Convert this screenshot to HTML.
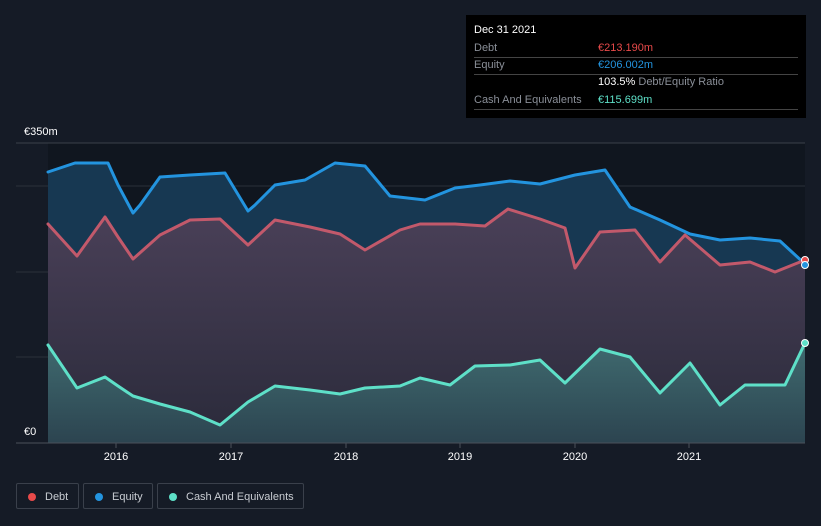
<!DOCTYPE html>
<html><head><meta charset="utf-8"><style>
body{margin:0;width:821px;height:526px;background:#151b26;font-family:"Liberation Sans",sans-serif;overflow:hidden;position:relative}
.tt{position:absolute;left:466px;top:15px;width:340px;height:103px;background:#000;color:#fff;font-size:11px}
.tt .r{position:absolute;left:8px;right:8px;border-bottom:1px solid #444;height:17px;line-height:17px}
.g{color:#8a8f98}
.leg{position:absolute;top:483px;height:26px;border:1px solid #3a404b;border-radius:2px;color:#c8ccd2;font-size:11px;line-height:26px;box-sizing:border-box}
.leg i{position:absolute;left:11px;top:9px;width:8px;height:8px;border-radius:50%}
</style></head><body>
<svg width="821" height="526" style="position:absolute;left:0;top:0">
<defs>
<linearGradient id="dg" x1="0" y1="0" x2="0" y2="1"><stop offset="0" stop-color="#4a4058"/><stop offset="1" stop-color="#2a2a3a"/></linearGradient>
<linearGradient id="cg" x1="0" y1="0" x2="0" y2="1"><stop offset="0" stop-color="#3f6a6f"/><stop offset="1" stop-color="#2c4450"/></linearGradient>
</defs>
<rect x="48" y="143" width="757" height="300" fill="#10161f"/>
<g stroke="#2a303a" stroke-width="1"><line x1="16" y1="143" x2="805" y2="143" stroke="#3a404a"/><line x1="16" y1="186" x2="805" y2="186"/><line x1="16" y1="272" x2="805" y2="272"/><line x1="16" y1="357" x2="805" y2="357"/></g>
<polygon fill="#173852" points="48,172 75,163 108,163 118,185 133,213 140,205 160,177 190,175 225,173 248,211 255,205 275,185 305,180 335,163 365,166 390,196 425,200 455,188 480,185 510,181 540,184 575,175 605,170 630,207 660,220 690,234 720,240 750,238 780,241 805,264 805,443 48,443"/>
<polygon fill="url(#dg)" points="48,224 77,256 105,217 118,237 133,259 160,235 190,220 220,219 248,245 275,220 310,227 340,234 365,250 400,230 420,224 455,224 485,226 508,209 540,219 565,228 575,268 600,232 635,230 660,262 685,235 720,265 750,262 775,272 805,260 805,443 48,443"/>
<polygon fill="url(#cg)" points="48,345 77,388 105,377 118,386 133,396 160,404 190,412 220,425 248,402 275,386 310,390 340,394 365,388 400,386 420,378 450,385 475,366 510,365 540,360 565,383 600,349 630,357 660,393 690,363 720,405 745,385 785,385 805,343 805,443 48,443"/>
<g fill="none" stroke-width="3" stroke-linejoin="round" stroke-linecap="round">
<polyline stroke="#2394df" points="48,172 75,163 108,163 118,185 133,213 140,205 160,177 190,175 225,173 248,211 255,205 275,185 305,180 335,163 365,166 390,196 425,200 455,188 480,185 510,181 540,184 575,175 605,170 630,207 660,220 690,234 720,240 750,238 780,241 805,264"/>
<polyline stroke="#c2596b" points="48,224 77,256 105,217 118,237 133,259 160,235 190,220 220,219 248,245 275,220 310,227 340,234 365,250 400,230 420,224 455,224 485,226 508,209 540,219 565,228 575,268 600,232 635,230 660,262 685,235 720,265 750,262 775,272 805,260"/>
<polyline stroke="#5ee0c8" points="48,345 77,388 105,377 118,386 133,396 160,404 190,412 220,425 248,402 275,386 310,390 340,394 365,388 400,386 420,378 450,385 475,366 510,365 540,360 565,383 600,349 630,357 660,393 690,363 720,405 745,385 785,385 805,343"/>
</g>
<circle cx="805" cy="260" r="3.5" fill="#e84a4a" stroke="#fff" stroke-width="1"/>
<circle cx="805" cy="265" r="3.5" fill="#2394df" stroke="#fff" stroke-width="1"/>
<circle cx="805" cy="343" r="3.5" fill="#5ee0c8" stroke="#fff" stroke-width="1"/>
<line x1="16" y1="443" x2="805" y2="443" stroke="#4a505a"/>
<g stroke="#4a505a"><line x1="116" y1="443" x2="116" y2="448"/><line x1="231" y1="443" x2="231" y2="448"/><line x1="346" y1="443" x2="346" y2="448"/><line x1="460" y1="443" x2="460" y2="448"/><line x1="575" y1="443" x2="575" y2="448"/><line x1="689" y1="443" x2="689" y2="448"/></g>
<g fill="#fff" font-size="11" text-anchor="middle" font-family="Liberation Sans"><text x="116" y="460">2016</text><text x="231" y="460">2017</text><text x="346" y="460">2018</text><text x="460" y="460">2019</text><text x="575" y="460">2020</text><text x="689" y="460">2021</text></g>
<g fill="#fff" font-size="11" font-family="Liberation Sans"><text x="24" y="135">€350m</text><text x="24" y="435">€0</text></g>
</svg>
<div class="tt">
<div style="position:absolute;left:8px;top:9px">Dec 31 2021</div>
<div class="r" style="top:25px"><span class="g">Debt</span><span style="position:absolute;left:124px;color:#e84a4a">€213.190m</span></div>
<div class="r" style="top:42px"><span class="g">Equity</span><span style="position:absolute;left:124px;color:#2394df">€206.002m</span></div>
<div style="position:absolute;left:132px;top:61px">103.5% <span class="g">Debt/Equity Ratio</span></div>
<div class="r" style="top:77px"><span class="g">Cash And Equivalents</span><span style="position:absolute;left:124px;color:#5ee0c8">€115.699m</span></div>
</div>
<div class="leg" style="left:16px;width:63px"><i style="background:#e84a4a"></i><span style="margin-left:28px">Debt</span></div>
<div class="leg" style="left:83px;width:70px"><i style="background:#2394df"></i><span style="margin-left:28px">Equity</span></div>
<div class="leg" style="left:157px;width:147px"><i style="background:#5ee0c8"></i><span style="margin-left:28px">Cash And Equivalents</span></div>
</body></html>
